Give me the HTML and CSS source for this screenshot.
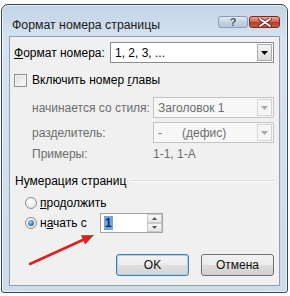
FILE: index.html
```html
<!DOCTYPE html>
<html lang="ru">
<head>
<meta charset="utf-8">
<link rel="stylesheet" href="styles.css">
</head>
<body>
<div class="window">
  <div class="titlebar">
    <span class="title">Формат номера страницы</span>
    <div class="caption-buttons">
      <span class="cbtn help">?</span>
      <span class="cbtn close"><svg width="14" height="9" viewBox="0 0 14 9"><path d="M2 1 L12 8 M12 1 L2 8" stroke="#5a2020" stroke-width="3.4" stroke-linecap="round"/><path d="M2 1 L12 8 M12 1 L2 8" stroke="#fff" stroke-width="1.8" stroke-linecap="round"/></svg></span>
    </div>
  </div>
  <div class="client">
    <div class="row row-format">
      <span class="lbl lbl-format"><u>Ф</u>ормат номера:</span>
      <div class="combo combo-main">
        <span class="combo-text">1, 2, 3, ...</span>
        <span class="combo-btn"><svg width="7" height="4" viewBox="0 0 7 4"><path d="M0 0 H7 L3.5 4 Z" fill="#000"/></svg></span>
      </div>
    </div>
    <div class="row row-check">
      <span class="checkbox"></span>
      <span class="opt">Включить номер <u>г</u>лавы</span>
    </div>
    <div class="row row-sub first">
      <span class="lbl sub">начинается со стиля:</span>
      <div class="combo combo-dis">
        <span class="combo-text">Заголовок 1</span>
        <span class="combo-btn dis"><svg width="7" height="4" viewBox="0 0 7 4"><path d="M0 0 H7 L3.5 4 Z" fill="#a8a8a8"/></svg></span>
      </div>
    </div>
    <div class="row row-sub">
      <span class="lbl sub">разделитель:</span>
      <div class="combo combo-dis">
        <span class="combo-text"><span class="dash">-</span>(дефис)</span>
        <span class="combo-btn dis"><svg width="7" height="4" viewBox="0 0 7 4"><path d="M0 0 H7 L3.5 4 Z" fill="#a8a8a8"/></svg></span>
      </div>
    </div>
    <div class="row row-examples">
      <span class="lbl sub">Примеры:</span>
      <span class="examples">1-1, 1-A</span>
    </div>
    <div class="group-head">
      <span class="group-title">Нумерация страниц</span>
      <span class="group-line"></span>
    </div>
    <div class="row row-radio">
      <span class="radio"></span>
      <span class="opt"><u>п</u>родолжить</span>
    </div>
    <div class="row row-radio">
      <span class="radio checked"></span>
      <span class="opt start">н<u>а</u>чать с</span>
      <div class="spin">
        <span class="spin-val"><span class="sel">1</span></span>
        <span class="spin-btns">
          <span class="sbtn"><svg width="5" height="3" viewBox="0 0 5 3"><path d="M0 3 H5 L2.5 0 Z" fill="#555"/></svg></span>
          <span class="sbtn"><svg width="5" height="3" viewBox="0 0 5 3"><path d="M0 0 H5 L2.5 3 Z" fill="#555"/></svg></span>
        </span>
      </div>
    </div>
    <div class="buttons">
      <span class="btn default">OK</span>
      <span class="btn">Отмена</span>
    </div>
  </div>
</div>
<svg class="arrow" width="72" height="40" viewBox="0 0 72 40">
  <path d="M4 34 L60 8.5" stroke="#e01f1f" stroke-width="2.6" stroke-linecap="round"/>
  <polygon points="68,5 59.2,14.5 55,5.3" fill="#e01f1f"/>
</svg>
</body>
</html>
```
FILE: styles.css
```css
html, body {
  margin: 0;
  padding: 0;
  background: #fff;
}
body {
  width: 290px;
  height: 296px;
  position: relative;
  overflow: hidden;
  font-family: "Liberation Sans", Arial, sans-serif;
  font-size: 12px;
  color: #000;
  white-space: nowrap;
}
.window {
  margin: 4px 0 0 1px;
  width: 271px;
  height: 281px;
  border: 1px solid #34465a;
  border-radius: 7px 7px 3px 3px;
  background: linear-gradient(180deg, #c3d4e7 0%, #d6e2ef 12%, #cddbea 100%);
  padding: 0 7px 6px 7px;
  display: flex;
  flex-direction: column;
  box-shadow: inset 0 0 0 1px rgba(255,255,255,0.55);
}
.titlebar {
  height: 31px;
  display: flex;
  align-items: flex-start;
  flex: none;
}
.title {
  margin: 12px 0 0 3px;
  font-size: 12.3px;
  color: #1b1b1b;
  line-height: 16px;
  flex: 1;
}
.caption-buttons {
  display: flex;
  gap: 1px;
  margin-top: 11px;
}
.cbtn {
  height: 12px;
  border-radius: 3px;
  display: flex;
  align-items: center;
  justify-content: center;
  box-sizing: border-box;
}
.help {
  width: 30px;
  border: 1px solid #8a9db3;
  background: linear-gradient(180deg, #e3ebf4 0%, #c5d3e3 50%, #b5c7db 100%);
  font-size: 11px;
  line-height: 9px;
  font-weight: bold;
  color: #3f4f62;
  text-shadow: 0 0 2px #fff;
}
.close {
  width: 31px;
  border: 1px solid #7b2a22;
  background: linear-gradient(180deg, #e7a79a 0%, #d0634f 45%, #b5402d 55%, #c95a45 100%);
}
.client {
  flex: 1;
  background: #f0f0f0;
  border: 1px solid #8ea0b5;
  padding: 0 5px 0 4px;
  display: flex;
  flex-direction: column;
}
.row {
  display: flex;
  align-items: center;
}
.lbl { color: #000; }
.lbl.sub { color: #6d6d6d; }
.row-format {
  margin-top: 5px;
  height: 21px;
}
.lbl-format { width: 96px; }
.combo {
  height: 21px;
  box-sizing: border-box;
  border: 1px solid #a9a9a9;
  background: #fff;
  display: flex;
  align-items: center;
  flex: 1;
}
.combo-main { border-color: #8c8c8c; }
.combo-text {
  flex: 1;
  padding-left: 4px;
}
.combo-btn {
  width: 15px;
  height: 17px;
  margin-right: 1px;
  box-sizing: border-box;
  border: 1px solid #adadad;
  background: linear-gradient(180deg, #f4f4f4, #dcdcdc);
  display: flex;
  align-items: center;
  justify-content: center;
}
.combo-btn.dis {
  border-color: #d4d4d4;
  background: #f6f6f6;
}
.combo-dis {
  border-color: #c4c4c4;
  background: #f7f7f7;
  color: #6d6d6d;
}
.dash { display: inline-block; width: 24px; }
.row-check {
  margin-top: 7px;
  height: 20px;
  padding-left: 0;
}
.checkbox {
  width: 13px;
  height: 13px;
  box-sizing: border-box;
  border: 1px solid #8e8f8f;
  background: linear-gradient(135deg, #dcdcdc, #fbfbfb);
  box-shadow: inset 0 0 0 1px #f4f4f4;
  margin-right: 5px;
}
.row-sub {
  margin-top: 4px;
  height: 21px;
  padding-left: 18px;
}
.row-sub.first { margin-top: 7px; }
.row-sub .lbl { width: 121px; }
.row-examples {
  margin-top: 1px;
  height: 20px;
  padding-left: 18px;
}
.row-examples .lbl { width: 121px; }
.examples { color: #6d6d6d; }
.group-head {
  margin-top: 9px;
  height: 16px;
  display: flex;
  align-items: center;
  padding-left: 1px;
}
.group-line {
  flex: 1;
  height: 1px;
  background: #d8dde3;
  border-bottom: 1px solid #fff;
  margin-left: 4px;
  margin-top: -1px;
}
.row-radio {
  height: 20px;
  padding-left: 11px;
}
.group-head + .row-radio { margin-top: 4px; }
.radio {
  width: 12px;
  height: 12px;
  border-radius: 50%;
  box-sizing: border-box;
  border: 1px solid #8f8f8f;
  background: radial-gradient(circle at 40% 35%, #fff 0%, #e6e6e6 70%, #d2d2d2 100%);
  margin-right: 3px;
  position: relative;
}
.radio.checked::after {
  content: "";
  position: absolute;
  left: 2px;
  top: 2px;
  width: 6px;
  height: 6px;
  border-radius: 50%;
  background: radial-gradient(circle at 40% 35%, #a9d6f7 0%, #2d75b8 60%, #1b4f86 100%);
}
.opt.start { width: 60px; }
.spin {
  width: 63px;
  height: 20px;
  box-sizing: border-box;
  border: 1px solid #a3a3a3;
  background: #fff;
  display: flex;
}
.spin-val {
  flex: 1;
  display: flex;
  align-items: center;
  padding-left: 3px;
}
.sel {
  background: #6fa5dd;
  color: #0c2a57;
  font-weight: bold;
  line-height: 14px;
  padding: 0 1px;
}
.spin-btns {
  width: 15px;
  display: flex;
  flex-direction: column;
}
.sbtn {
  flex: 1;
  border: 1px solid #c9c9c9;
  background: linear-gradient(180deg, #f7f7f7, #e6e6e6);
  display: flex;
  align-items: center;
  justify-content: center;
}
.buttons {
  margin-top: 21px;
  display: flex;
  justify-content: flex-end;
  gap: 12px;
}
.btn {
  width: 73px;
  height: 22px;
  box-sizing: border-box;
  border: 1px solid #707070;
  border-radius: 3px;
  background: linear-gradient(180deg, #f2f2f2 0%, #ebebeb 50%, #dddddd 51%, #cfcfcf 100%);
  display: flex;
  align-items: center;
  justify-content: center;
  color: #111;
}
.btn.default {
  border-color: #3c7fb1;
  box-shadow: inset 0 0 0 1px #a6d3f1;
  background: linear-gradient(180deg, #f3f3f3 0%, #ececec 50%, #dfdfdf 51%, #d4d4d4 100%);
}
.arrow {
  position: absolute;
  left: 26px;
  top: 230px;
}
```
